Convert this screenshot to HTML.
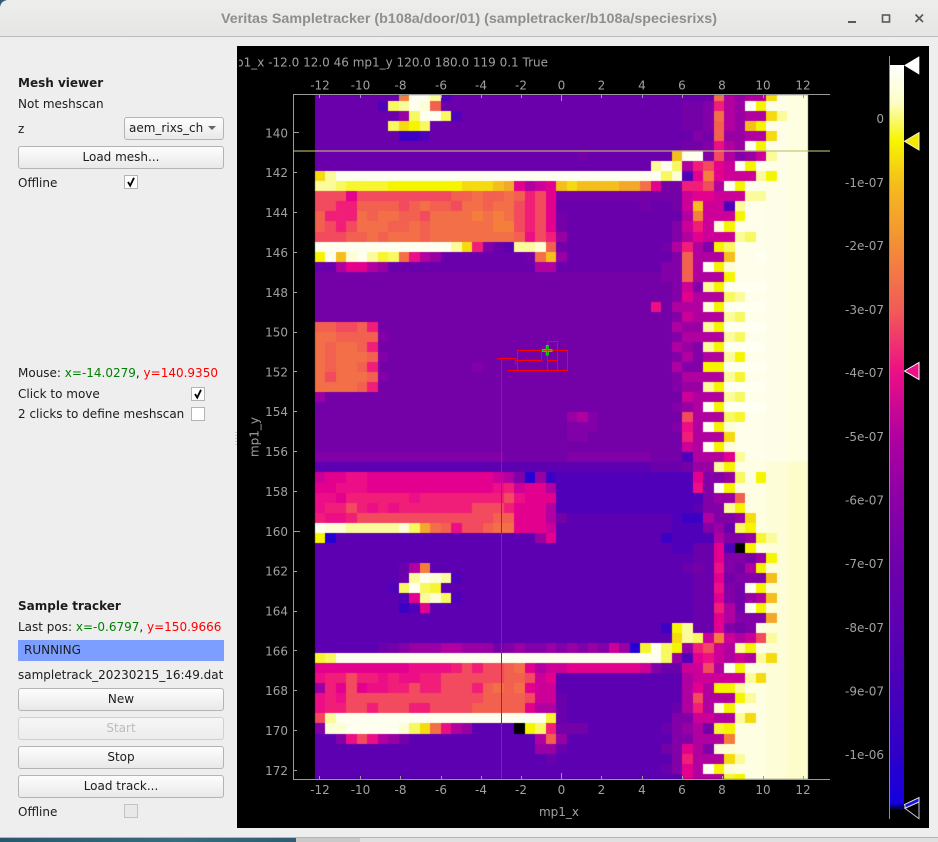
<!DOCTYPE html>
<html><head><meta charset="utf-8"><title>Veritas Sampletracker</title>
<style>
html,body{margin:0;padding:0;width:938px;height:842px;overflow:hidden;background:#eeeeee;font-family:"DejaVu Sans",sans-serif;font-size:12px;color:#1c1c1c}
.t{position:absolute;white-space:nowrap;line-height:16px;height:16px}
.b{font-weight:bold}
.btn{position:absolute;box-sizing:border-box;left:18px;width:206px;height:23px;border:1px solid #b4b4b4;border-radius:3px;background:linear-gradient(#fdfdfd,#e9e9e9);text-align:center;line-height:20px}
.cb{position:absolute;box-sizing:border-box;width:14px;height:14px;border:1px solid #b4b4b4;background:#fff}
.cb svg{position:absolute;left:0;top:0}
#tb{position:absolute;left:0;top:0;width:938px;height:37px;background:linear-gradient(#ededec,#e6e6e5);border-bottom:1px solid #bdbdbd;box-sizing:border-box}
#hm{position:absolute;left:0;top:0}
</style></head>
<body>
<div id="tb"></div>
<svg style="position:absolute;left:0;top:0" width="938" height="37">
<path d="M0 0H7Q1 1 0 7Z" fill="#2f5c74"/>
<text x="221" y="23" font-family="Liberation Sans" font-weight="bold" font-size="14" fill="#8e8e8e" textLength="496" lengthAdjust="spacingAndGlyphs">Veritas Sampletracker (b108a/door/01) (sampletracker/b108a/speciesrixs)</text>
<path d="M848 22H856" stroke="#5a5a5a" stroke-width="2"/>
<rect x="882.5" y="15" width="7" height="7" fill="none" stroke="#5a5a5a" stroke-width="1.6"/>
<path d="M915.5 14.5L923 22M923 14.5L915.5 22" stroke="#5a5a5a" stroke-width="1.7"/>
</svg>

<div class="t b" style="left:18px;top:75px">Mesh viewer</div>
<div class="t" style="left:18px;top:96px">Not meshscan</div>
<div class="t" style="left:18px;top:121px">z</div>
<div class="btn" style="left:124px;top:117px;width:100px;text-align:left;padding-left:4px">aem_rixs_ch</div>
<svg style="position:absolute;left:208px;top:126px" width="9" height="5"><path d="M0 0H8L4 4Z" fill="#666"/></svg>
<div class="btn" style="top:146px">Load mesh...</div>
<div class="t" style="left:18px;top:175px">Offline</div>
<div class="cb" style="left:124px;top:175px"><svg width="12" height="12"><path d="M3 6L5.2 9.6L9 1.8" fill="none" stroke="#000" stroke-width="1.8"/></svg></div>

<div class="t" style="left:18px;top:365px">Mouse: <span style="color:#008000">x=-14.0279</span>, <span style="color:#ff0000">y=140.9350</span></div>
<div class="t" style="left:18px;top:386px">Click to move</div>
<div class="cb" style="left:191px;top:387px"><svg width="12" height="12"><path d="M3 6L5.2 9.6L9 1.8" fill="none" stroke="#000" stroke-width="1.8"/></svg></div>
<div class="t" style="left:18px;top:406px">2 clicks to define meshscan</div>
<div class="cb" style="left:191px;top:407px"></div>

<div class="t b" style="left:18px;top:598px">Sample tracker</div>
<div class="t" style="left:18px;top:619px">Last pos: <span style="color:#008000">x=-0.6797</span>, <span style="color:#ff0000">y=150.9666</span></div>
<div style="position:absolute;left:18px;top:640px;width:206px;height:21px;background:#7c9fff;line-height:21px;text-indent:6px">RUNNING</div>
<div class="t" style="left:18px;top:667px">sampletrack_20230215_16:49.dat</div>
<div class="btn" style="top:688px">New</div>
<div class="btn" style="top:717px;color:#bcbcbc;border-color:#cfcfcf;background:linear-gradient(#f6f6f6,#ececec)">Start</div>
<div class="btn" style="top:746px">Stop</div>
<div class="btn" style="top:775px">Load track...</div>
<div class="t" style="left:18px;top:804px">Offline</div>
<div class="cb" style="left:124px;top:804px;background:#e8e8e8;border-color:#c2c2c2"></div>

<svg style="position:absolute;left:235px;top:431px" width="3" height="16"><path d="M1 1V15" stroke="#a8a8a8" stroke-dasharray="1 2"/></svg>

<div style="position:absolute;left:237px;top:46px;width:692px;height:782px;background:#000"></div>
<canvas id="hm" width="938" height="842"></canvas>

<svg style="position:absolute;left:0;top:0" width="938" height="842" font-family="DejaVu Sans" font-size="12" fill="#a0a0a0">
<defs>
<clipPath id="cp"><rect x="239" y="46" width="690" height="782"/></clipPath>
<linearGradient id="cbg" gradientUnits="userSpaceOnUse" x1="0" y1="65" x2="0" y2="810">
<stop offset="0" stop-color="#ffffff"/>
<stop offset=".05" stop-color="#fdfdc8"/>
<stop offset=".102" stop-color="#f6f500"/>
<stop offset=".16" stop-color="#f5bd1c"/>
<stop offset=".245" stop-color="#f38c38"/>
<stop offset=".33" stop-color="#f25a58"/>
<stop offset=".41" stop-color="#ec1084"/>
<stop offset=".5" stop-color="#b000a0"/>
<stop offset=".585" stop-color="#8a00a6"/>
<stop offset=".67" stop-color="#6e00aa"/>
<stop offset=".755" stop-color="#5c00b2"/>
<stop offset=".84" stop-color="#4800ba"/>
<stop offset=".925" stop-color="#2e00c8"/>
<stop offset=".99" stop-color="#1400de"/>
<stop offset="1" stop-color="#000030"/>
</linearGradient>
</defs>
<g clip-path="url(#cp)"><text x="548" y="66.7" text-anchor="end">mp1_x -12.0 12.0 46 mp1_y 120.0 180.0 119 0.1 True</text></g>

<path d="M293.5 779V94.5H830M293 779.5H830" fill="none" stroke="#9a9a9a" stroke-width="1"/>
<path stroke="#9a9a9a" stroke-width="1" fill="none" d="M319.5 95v3M360.5 95v3M400.5 95v3M441.5 95v3M481.5 95v3M521.5 95v3M561.5 95v6M601.5 95v3M642.5 95v3M682.5 95v3M722.5 95v3M763.5 95v3M803.5 95v3
M319.5 779v-3M360.5 779v-3M400.5 779v-3M441.5 779v-3M481.5 779v-3M521.5 779v-3M561.5 779v-6M601.5 779v-3M642.5 779v-3M682.5 779v-3M722.5 779v-3M763.5 779v-3M803.5 779v-3
M294 132.5h5M294 172.5h3M294 212.5h3M294 252.5h3M294 292.5h3M294 332.5h3M294 371.5h3M294 411.5h3M294 451.5h3M294 491.5h3M294 531.5h6M294 571.5h3M294 611.5h3M294 650.5h3M294 690.5h3M294 730.5h3M294 770.5h3"/>

<g text-anchor="middle">
<text x="320" y="89.5">-12</text><text x="360.5" y="89.5">-10</text><text x="400.5" y="89.5">-8</text><text x="441" y="89.5">-6</text><text x="481" y="89.5">-4</text><text x="521" y="89.5">-2</text><text x="561.5" y="89.5">0</text><text x="601.5" y="89.5">2</text><text x="642" y="89.5">4</text><text x="682" y="89.5">6</text><text x="722" y="89.5">8</text><text x="763" y="89.5">10</text><text x="803" y="89.5">12</text>
<text x="320" y="794">-12</text><text x="360.5" y="794">-10</text><text x="400.5" y="794">-8</text><text x="441" y="794">-6</text><text x="481" y="794">-4</text><text x="521" y="794">-2</text><text x="561.5" y="794">0</text><text x="601.5" y="794">2</text><text x="642" y="794">4</text><text x="682" y="794">6</text><text x="722" y="794">8</text><text x="763" y="794">10</text><text x="803" y="794">12</text>
<text x="559" y="816">mp1_x</text>
<text transform="translate(258.5 437) rotate(-90)">mp1_y</text>
</g>
<g text-anchor="end">
<text x="288" y="137.3">140</text><text x="288" y="177">142</text><text x="288" y="217">144</text><text x="288" y="257">146</text><text x="288" y="297">148</text><text x="288" y="336.5">150</text><text x="288" y="376.3">152</text><text x="288" y="416">154</text><text x="288" y="456">156</text><text x="288" y="496">158</text><text x="288" y="536">160</text><text x="288" y="575.5">162</text><text x="288" y="615.5">164</text><text x="288" y="655.3">166</text><text x="288" y="695">168</text><text x="288" y="735">170</text><text x="288" y="775">172</text>
<text x="884" y="123">0</text><text x="884" y="187">-1e-07</text><text x="884" y="250">-2e-07</text><text x="884" y="314">-3e-07</text><text x="884" y="377">-4e-07</text><text x="884" y="441">-5e-07</text><text x="884" y="504.5">-6e-07</text><text x="884" y="568">-7e-07</text><text x="884" y="632">-8e-07</text><text x="884" y="695.5">-9e-07</text><text x="884" y="759">-1e-06</text>
</g>

<path d="M293 151H830" stroke="#c0c070" stroke-opacity=".55" stroke-width="2"/>

<g fill="none" stroke="#ff0000" stroke-width="1">
<path d="M501.5 779V358.5H498M501.5 358.5H515.5V365M515.5 360.5H541.5V350.5H517.5V370.5M508 370.5H567.5V350.5H541.5M547.5 370.5V341.5H557.5V370.5M547.5 360.5H557.5"/>
</g>
<path d="M542 350.5h10.5M547.3 345v10.5" stroke="#00e000" stroke-width="3" fill="none"/>
<path d="M543 350.5h8.5M547.3 346v8.5" stroke="#ff2000" stroke-width=".7" fill="none"/>

<path d="M889.5 56V819" stroke="#8c8c8c" stroke-width="1"/>
<rect x="890" y="65" width="14" height="745" fill="url(#cbg)"/>
<path d="M904 65.4L919.3 56.3V74.6Z" fill="#ffffff"/>
<path d="M904.5 141.3L919 132.6V150Z" fill="#f5e800" stroke="#f8f8c0" stroke-width="1"/>
<path d="M904.5 371L919 362.5V379.5Z" fill="#ee1088" stroke="#ffffff" stroke-width="1"/>
<path d="M904.5 808L919 798V818.6Z" fill="#000" stroke="#c8c8c8" stroke-width="1"/>
<path d="M904.5 804.6L919 797.5V802L905.5 808Z" fill="#1414e0" stroke="#e0e0e0" stroke-width="1"/>
</svg>

<div style="position:absolute;left:0;top:837px;width:938px;height:5px;background:#e0e0e0;border-top:1px solid #b4b4b4;box-sizing:border-box"></div>
<div style="position:absolute;left:0;top:838px;width:296px;height:4px;background:linear-gradient(90deg,#2a5670,#3b6a80 60%,#2f5c74)"></div>
<div style="position:absolute;left:296px;top:838px;width:64px;height:4px;background:#c9c9c9"></div>

<script>
var P={W:'#fffff0',w:'#fdfdd6',v:'#fbfb9c',u:'#f8f860',x:'#f6f530',y:'#f6f500',Y:'#f6da10',g:'#f4bf1c',G:'#f3a82a',o:'#f47f3c',O:'#f36f48',r:'#f26050',R:'#f24a5e',p:'#f01e78',P:'#ec0e86',m:'#e4008e',M:'#cc0098',n:'#b000a0',N:'#9800a4',a:'#8200a8',b:'#7400a8',c:'#6a00ac',d:'#5c00b2',e:'#5000b8',f:'#3c00c4',h:'#2400d4',k:'#000000'};
var R=[
"c8oWWvec11c14OnNnnYwWW",
"c6euvWwrc12c11bbapnNWyWwWW",
"c8NuWWuec10c11bbaOnNnnYvWW",
"c7uYyuc13c11bbarnNgyWwWW",
"c8ffec13c11cabrNNnnYwWW",
"c24c11bbaPnNWyWWWW",
"c24cbc8gWWaRnaNMvwWW",
"c24c8vWunpRmMWyW5",
"YvW22W9uwemomMMMvyWWW",
"vvuxxxxy7YYYgGmnMmgYggggGGOmbbppRnWywwwwWW",
"RRRmR9rrOrrOrpRmbb11MmmMMMvvwwWW",
"RRpprrrrRrOrrROOrOORpRmcc7bccbMgMMevwwwwWW",
"rpppOrOOrrROOOOoOoORpRmbc11noMMMywwwwWW",
"rRpROOOrrOrOOOOOOooRpRmbc10aMpMwywwwwwWW",
"RRRrrOrOOOrOOOOOOOOrPRpNc10anmMMMvuwwwWW",
"W13vYpacdvvwrbc9bnpnayuwwwwWWW",
"yWgwWvxuOPnNc8bOgNc10arnnngwwW5",
"ccnmmnNc14nncc9aarnWywwwwWWWW",
"b24b9aarnnnyw7",
"b24b10aMavyW8",
"b24b10amnnnuvw6",
"b24b8PbnnnwyW8",
"b24b10aMnnnvuw6",
"rrRRrpb18b10nNNvyW8",
"OOrrrrab17b10annnnvuw6",
"OrOOrpb18b10nNavyW8",
"OrOOOrab17b10anannvyw6",
"OrOOrpb9ab8b10naayyW8",
"OROOOrab17b10annnnvxw6",
"OOOOrpb18b10aNNvyW8",
"Nb23b10bMnnnvuw6",
"b24b10aNnWyW8",
"b24Nnab7bRnnnuxw6",
"b24aaab7aPnWyw8",
"b24aab9pnnnYw7",
"b24b11MnWyw8",
"a18b6a8bbbennnmvw6",
"d24d8cccbNNvyw7",
"MmmPPmm11MnahNfee12maaNuwywwww",
"mmPPPm12PpMmmnee12PaWyw7",
"PPmp6Pp8RPmmmee13aNNrw6",
"PppRpPpPpp6RRRpmmmnee12daavyw6",
"pPPpR13rrmmmnbd10effnaaNYw5",
"WwwvvvvvwuGOrPRRrOOmmmMdd10eeeaNcuyw5",
"yhd19Nmdd9feeeenaaNxvwww",
"d24d10eeccmekywwwww",
"d24d12ccmaabNyw3",
"d8cnod13d11cbcPabnyw4",
"d8cvWwved10d11dccmbaaagw3",
"d7euWuxd12d11dccPabWyw4",
"d8emvwued10d11dccmabNngw3",
"d8femd13d11dccpnbWyw4",
"d24d11dccmnaaaGw3",
"d24d9fyvccmabaw5",
"d24d10YvuMoMnMRvw3",
"d6cbaNNNnnNNNbaNaaNaNaNaMNhxWuyNpRMnvyw5",
"xuW22W9uNemPMnMnvYw3",
"m9PPPPpRpRRrOmnMMm7MaccMMRnWyw6",
"PppRppPpPPppR6rrRMmdd11nMMMMMvYw4",
"NpmRmPPppRppRRRprOrOmMMdd11nmnyyvw6",
"PpPRR11RrrrrRMMcd11nRnnnyvw5",
"PppRRpRRRppR4r5mnncd10cnpnwyw7",
"RvW20xcd10aaMMnnvYw5",
"awwWWWWWwuYOPnNddddkyupbbbd7caNnbxyw7",
"ddaPRPnNbd12nrNd10aannnow7",
"d21NNcd9bamnaww8",
"d22cdd10apnnnYvw6",
"d24d9camnWyw8",
"d24d11mnnnxyw6"
];
var ctx=document.getElementById('hm').getContext('2d');
function rowY(j){return j===0?95:Math.round(101+10.04*(j-1));}
function cream(j,i,ch){
  if(j<37){
    if(i>=45) return '#fefee0';
    if(i>=43) return '#fefee8';
    return ch==='W'?'#fffff2':'#fefeea';
  }
  if(i>=45) return '#fdfdcc';
  if(i>=43) return '#fdfdd8';
  return ch==='W'?'#fefeee':'#fefee2';
}
for(var j=0;j<R.length;j++){
  var s=R[j].replace(/(\D)(\d+)/g,function(a,c,n){return new Array(+n+1).join(c);});
  var y0=rowY(j),y1=j===R.length-1?779:rowY(j+1);
  for(var i=0;i<47&&i<s.length;i++){
    var x0=Math.floor(315+10.5*i),x1=Math.floor(315+10.5*(i+1));
    var ch=s[i];
    ctx.fillStyle=(i>=40&&(ch==='W'||ch==='w'))?cream(j,i,ch):(P[ch]||'#000');
    ctx.fillRect(x0,y0,x1-x0,y1-y0);
  }
}
</script>
</body></html>
